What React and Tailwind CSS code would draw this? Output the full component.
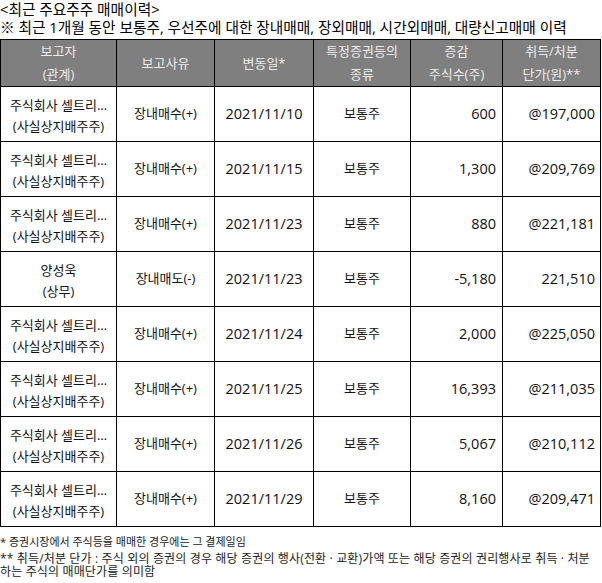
import React from "react";

const rows = [
  { who: "주식회사 셀트리…", rel: "(사실상지배주주)", reason: "장내매수(+)", date: "2021/11/10", kind: "보통주", qty: "600", price: "@197,000" },
  { who: "주식회사 셀트리…", rel: "(사실상지배주주)", reason: "장내매수(+)", date: "2021/11/15", kind: "보통주", qty: "1,300", price: "@209,769" },
  { who: "주식회사 셀트리…", rel: "(사실상지배주주)", reason: "장내매수(+)", date: "2021/11/23", kind: "보통주", qty: "880", price: "@221,181" },
  { who: "양성욱", rel: "(상무)", reason: "장내매도(-)", date: "2021/11/23", kind: "보통주", qty: "-5,180", price: "221,510" },
  { who: "주식회사 셀트리…", rel: "(사실상지배주주)", reason: "장내매수(+)", date: "2021/11/24", kind: "보통주", qty: "2,000", price: "@225,050" },
  { who: "주식회사 셀트리…", rel: "(사실상지배주주)", reason: "장내매수(+)", date: "2021/11/25", kind: "보통주", qty: "16,393", price: "@211,035" },
  { who: "주식회사 셀트리…", rel: "(사실상지배주주)", reason: "장내매수(+)", date: "2021/11/26", kind: "보통주", qty: "5,067", price: "@210,112" },
  { who: "주식회사 셀트리…", rel: "(사실상지배주주)", reason: "장내매수(+)", date: "2021/11/29", kind: "보통주", qty: "8,160", price: "@209,471" },
];

const th = "border border-black bg-[#7f7f7f] text-[#ececec] font-normal text-[13px] leading-[23px] text-center align-middle p-0";
const td = "border border-black text-[13px] text-[#111] align-middle p-0 h-[55px]";

export default function App() {
  return (
    <div
      className="w-[602px] h-[583px] bg-white text-black overflow-hidden"
      style={{ fontFamily: '"Open Sans", "Noto Sans CJK KR", sans-serif' }}
    >
      <div className="text-[14.7px] leading-[18px]">
        <div>&lt;최근 주요주주 매매이력&gt;</div>
        <div className="whitespace-nowrap">※ 최근 1개월 동안 보통주, 우선주에 대한 장내매매, 장외매매, 시간외매매, 대량신고매매 이력</div>
      </div>

      <table className="mt-[3px] border-collapse table-fixed w-[600px]">
        <colgroup>
          <col className="w-[116px]" />
          <col className="w-[98px]" />
          <col className="w-[99px]" />
          <col className="w-[97px]" />
          <col className="w-[92px]" />
          <col className="w-[98px]" />
        </colgroup>
        <thead>
          <tr className="h-[46px]">
            <th className={th}>보고자<br />(관계)</th>
            <th className={th}>보고사유</th>
            <th className={th}>변동일*</th>
            <th className={th}>특정증권등의<br />종류</th>
            <th className={th}>증감<br />주식수(주)</th>
            <th className={th}>취득/처분<br />단가(원)**</th>
          </tr>
        </thead>
        <tbody>
          {rows.map((r, i) => (
            <tr key={i}>
              <td className={td + " text-center leading-[21px] pt-[3px]"}>
                <div className="whitespace-nowrap">{r.who}</div>
                <div className="whitespace-nowrap">{r.rel}</div>
              </td>
              <td className={td + " text-center"}>{r.reason}</td>
              <td className={td + " text-center text-[14.5px]"}>{r.date}</td>
              <td className={td + " text-center"}>{r.kind}</td>
              <td className={td + " text-right text-[14.5px] pr-[6px]"}>{r.qty}</td>
              <td className={td + " text-right text-[14.5px] pr-[5px]"}>{r.price}</td>
            </tr>
          ))}
        </tbody>
      </table>

      <div className="mt-[8px] text-[#222]">
        <div className="text-[11px] leading-[14px]">* 증권시장에서 주식등을 매매한 경우에는 그 결제일임</div>
        <div className="text-[12px] tracking-[0.15px]">
          <div className="mt-[3px] leading-[13px] whitespace-nowrap">
            ** 취득/처분 단가 : 주식 외의 증권의 경우 해당 증권의 행사(전환 · 교환)가액 또는 해당 증권의 권리행사로 취득 · 처분
          </div>
          <div className="leading-[14px]">하는 주식의 매매단가를 의미함</div>
        </div>
      </div>
    </div>
  );
}
